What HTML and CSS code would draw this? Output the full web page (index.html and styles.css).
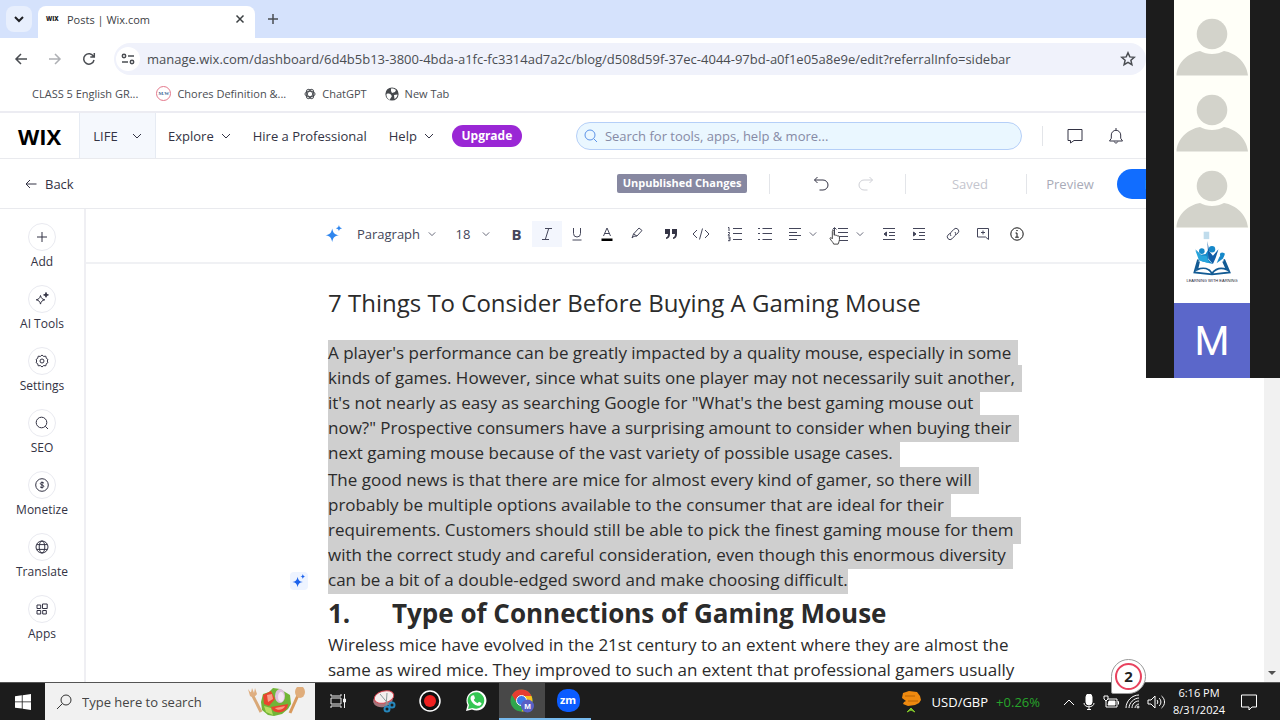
FILE: index.html
```html
<!DOCTYPE html>
<html lang="en">
<head>
<meta charset="utf-8">
<title>Posts | Wix.com</title>
<link rel="stylesheet" href="styles.css">
</head>
<body>
<svg class="defs" aria-hidden="true">
  <symbol id="chev" viewBox="0 0 10 10"><path d="M1 3l4 4 4-4"/></symbol>
  <symbol id="person" viewBox="0 0 76 76"><circle cx="38" cy="34" r="15.300"/><path d="M2.500 75.500C3 63 14 53 26 51c7 4 17 4 24 0 12 2 23 12 24 24.500z"/></symbol>
  <symbol id="spark" viewBox="0 0 20 20"><path d="M8 4c1 5 2.500 6.500 7.500 7.500C10.500 12.500 9 14 8 19c-1-5-2.500-6.500-7.500-7.500C5.500 10.500 7 9 8 4zM15.500 0c.5 2.300 1.200 3 3.500 3.500-2.300.5-3 1.200-3.500 3.500-.5-2.300-1.200-3-3.500-3.500 2.300-.5 3-1.200 3.500-3.500z"/></symbol>
</svg>

<header class="browser">
  <div class="tabstrip">
    <button class="tabsearch" aria-label="Search tabs"><svg class="ic s10"><use href="#chev"/></svg></button>
    <div class="tab"><span class="favicon">WIX</span><span class="tabname">Posts | Wix.com</span>
      <button aria-label="Close tab"><svg class="ic s10" viewBox="0 0 10 10"><path d="M1.500 1.500l7 7M8.500 1.500l-7 7"/></svg></button></div>
    <button class="newtab" aria-label="New tab"><svg class="ic s12" viewBox="0 0 12 12"><path d="M6 1v10M1 6h10"/></svg></button>
  </div>
  <div class="navbar">
    <button aria-label="Back"><svg class="ic s14" viewBox="0 0 14 14"><path d="M13 7H2M7 2L2 7l5 5"/></svg></button>
    <button class="dim" aria-label="Forward"><svg class="ic s14" viewBox="0 0 14 14"><path d="M1 7h11M7 2l5 5-5 5"/></svg></button>
    <button aria-label="Reload"><svg class="ic s14" viewBox="0 0 14 14"><path d="M11.500 4.500A5.200 5.200 0 1 0 12 8M12.300 1v4H8.300"/></svg></button>
    <div class="omnibox">
      <button class="siteinfo" aria-label="Site information"><svg class="ic s14" viewBox="0 0 14 14"><circle cx="3" cy="4" r="1.700"/><path d="M7 4h6M1 10h6"/><circle cx="11" cy="10" r="1.700"/></svg></button>
      <input class="url" aria-label="Address" value="manage.wix.com/dashboard/6d4b5b13-3800-4bda-a1fc-fc3314ad7a2c/blog/d508d59f-37ec-4044-97bd-a0f1e05a8e9e/edit?referralInfo=sidebar">
      <button class="star" aria-label="Bookmark"><svg class="ic s16" viewBox="0 0 16 16"><path d="M8 1.800l1.800 4.100 4.500.4-3.400 3 1 4.400L8 11.400l-3.900 2.300 1-4.400-3.400-3 4.500-.4z"/></svg></button>
    </div>
  </div>
  <nav class="bookmarks">
    <a href="#">CLASS 5 English GR...</a>
    <a href="#"><span class="mw">M.W</span>Chores Definition &amp;...</a>
    <a href="#"><svg class="ic s12" viewBox="0 0 12 12"><ellipse cx="6" cy="6" rx="5" ry="2.700"/><ellipse cx="6" cy="6" rx="5" ry="2.700" transform="rotate(60 6 6)"/><ellipse cx="6" cy="6" rx="5" ry="2.700" transform="rotate(120 6 6)"/></svg>ChatGPT</a>
    <a href="#"><svg class="s14" viewBox="0 0 14 14"><circle cx="7" cy="7" r="6.600" fill="#45484c"/><path d="M1.500 7c3-1 4 0 5 1.500S5 11 5 13C2.500 12 1.200 10 1.500 7zM6 1.500c2-.3 4 .5 5 1.500l-1 2-3 1-1-2zM9 8l3.500-.5c0 2-1.500 4-3 4.500z" fill="#fff"/></svg>New Tab</a>
  </nav>
</header>

<header class="wixbar">
  <div class="logo">WIX</div>
  <button class="site">LIFE<svg class="ic s10"><use href="#chev"/></svg></button>
  <nav class="menu">
    <button>Explore<svg class="ic s10"><use href="#chev"/></svg></button>
    <a href="#">Hire a Professional</a>
    <button>Help<svg class="ic s10"><use href="#chev"/></svg></button>
  </nav>
  <button class="upgrade">Upgrade</button>
  <label class="search"><svg class="ic s14" viewBox="0 0 14 14"><circle cx="6" cy="6" r="5"/><path d="M9.700 9.700L13 13"/></svg><input type="search" aria-label="Search" placeholder="Search for tools, apps, help &amp; more..."></label>
  <span class="rule"></span>
  <button class="inbox" aria-label="Inbox"><svg class="ic s18" viewBox="0 0 18 18"><path d="M2 2.500h14v11H8L4.500 16v-2.500H2z"/></svg></button>
  <button class="bell" aria-label="Notifications"><svg class="ic s18" viewBox="0 0 18 18"><path d="M2.500 14h13l-1.800-2.700V8a4.700 4.700 0 0 0-9.400 0v3.300zM7.200 14.500c.5 2 3 2 3.600 0M9 1v2"/></svg></button>
</header>

<div class="actionbar">
  <button class="back"><svg class="ic s12" viewBox="0 0 12 12"><path d="M11.500 6H1M5 2L1 6l4 4"/></svg>Back</button>
  <span class="badge">Unpublished Changes</span>
  <span class="rule"></span>
  <button class="undo" aria-label="Undo"><svg class="ic s16" viewBox="0 0 16 16"><path d="M4.500 1L1.500 4l3 3M1.500 4H10a5 5 0 0 1 0 10H6.500"/></svg></button>
  <button class="redo" aria-label="Redo"><svg class="ic s16" viewBox="0 0 16 16"><path d="M11.500 1l3 3-3 3M14.500 4H6a5 5 0 0 0 0 10h3.500"/></svg></button>
  <span class="rule"></span>
  <span class="saved">Saved</span>
  <span class="rule"></span>
  <button class="preview">Preview</button>
  <button class="publish">Publish</button>
</div>

<div class="workspace">
  <nav class="sidebar">
    <button><span><svg class="ic s12" viewBox="0 0 12 12"><path d="M6 1v10M1 6h10"/></svg></span>Add</button>
    <button><span><svg class="ic s14" viewBox="0 0 14 14"><path d="M5.500 3.500c.7 2.800 1.500 3.600 4.300 4.300-2.800.7-3.600 1.500-4.300 4.300-.7-2.800-1.500-3.600-4.300-4.300 2.800-.7 3.600-1.500 4.300-4.300z"/><path d="M11 .5c.4 1.500.9 2 2.400 2.400-1.500.4-2 .9-2.400 2.400-.4-1.500-.9-2-2.400-2.400C10.100 2.500 10.600 2 11 .5z" fill="#333344"/></svg></span>AI Tools</button>
    <button><span><svg class="ic s14" viewBox="0 0 14 14"><path d="M7 1l1.600 1.400 2.200-.2.500 2.100L13 5.600 12.200 7l.8 1.500-1.700 1.200-.5 2.100-2.200-.2L7 13l-1.600-1.400-2.200.2-.5-2.100L1 8.500 1.800 7 1 5.600l1.700-1.300.5-2.100 2.200.2z"/><circle cx="7" cy="7" r="2"/></svg></span>Settings</button>
    <button><span><svg class="ic s14" viewBox="0 0 14 14"><circle cx="6.500" cy="6.500" r="5.300"/><path d="M10.300 10.300L13 13"/></svg></span>SEO</button>
    <button><span><svg class="ic s14" viewBox="0 0 14 14"><circle cx="7" cy="7" r="6.300"/><path d="M9 5.200C8 4 5.200 4.200 5.300 5.700 5.400 7.300 8.800 6.600 8.800 8.300 8.800 9.800 6 10 5 8.800M7 3.500v7"/></svg></span>Monetize</button>
    <button><span><svg class="ic s14" viewBox="0 0 14 14"><circle cx="7" cy="7" r="6"/><ellipse cx="7" cy="7" rx="2.800" ry="6"/><path d="M1.800 4.600h10.400M1.800 9.400h10.400"/></svg></span>Translate</button>
    <button><span><svg class="ic s12" viewBox="0 0 12 12"><path d="M1 2h3.700v3.500H1zM1 7.500h3.700V11H1zM6.700 7.500h3.600V11H6.700zM6.500 1h4.700v4.500H6.500z"/></svg></span>Apps</button>
  </nav>

  <main class="editor">
    <div class="toolbar" role="toolbar">
      <button class="t-ai" aria-label="AI"><svg class="s18 aiblue"><use href="#spark"/></svg></button>
      <button class="t-para">Paragraph<svg class="ic s8"><use href="#chev"/></svg></button>
      <button class="t-size">18<svg class="ic s8"><use href="#chev"/></svg></button>
      <button class="tb" aria-label="Bold"><b>B</b></button>
      <button class="tb on" aria-label="Italic"><svg class="ic s14" viewBox="0 0 14 14"><path d="M5 1.500h7M2 12.500h7M8.700 1.500l-3.400 11"/></svg></button>
      <button class="tb" aria-label="Underline"><svg class="ic s14" viewBox="0 0 14 14"><path d="M3.500 1v5.500a3.500 3.500 0 0 0 7 0V1M2.500 13h9"/></svg></button>
      <button class="tb" aria-label="Text color"><svg class="ic s14" viewBox="0 0 14 14"><path d="M3.500 9L7 1l3.500 8M4.500 6.500h5"/><path d="M1.500 13h11" stroke="#000" stroke-width="3"/></svg></button>
      <button class="tb" aria-label="Highlight"><svg class="ic s14" viewBox="0 0 14 14"><path d="M2 11l1.500-4L9 1 12 3.500 7 9l-3 .3zM3.500 7L7 9"/></svg></button>
      <button class="tb wide" aria-label="Quote"><svg class="s14" viewBox="0 0 14 14"><path d="M1 2h5v5c0 3-1.500 4.500-4 5v-1.500C3.500 10 4 9 4 7H1zM8 2h5v5c0 3-1.500 4.500-4 5v-1.500c1.500-.5 2-1.500 2-3.500H8z" fill="#333344"/></svg></button>
      <button class="tb" aria-label="Code"><svg class="ic s18" viewBox="0 0 18 18"><path d="M5 5L1 9l4 4M13 5l4 4-4 4M10.500 3.500l-3 11"/></svg></button>
      <button class="tb wide" aria-label="Numbered list"><svg class="ic s16" viewBox="0 0 16 16"><path d="M6 2.500h9M6 7.500h9M6 13.500h9M1 1.500h1v3.500M1 6.500h1.500v1L1 9.200h2M1 11h2v3.700H1M1.500 12.800H3"/></svg></button>
      <button class="tb" aria-label="Bulleted list"><svg class="ic s16" viewBox="0 0 16 16"><path d="M5.500 2.500H15M5.500 7.500H15M5.500 13.500H15M1 2.500h2M1 7.500h2M1 13.500h2"/></svg></button>
      <button class="tb drop" aria-label="Align"><svg class="ic s14" viewBox="0 0 14 14"><path d="M1 1.500h12M1 5.500h8M1 8.500h12M1 12.500h8"/></svg><svg class="ic s8"><use href="#chev"/></svg></button>
      <button class="tb drop" aria-label="Line spacing"><svg class="ic s18" viewBox="0 0 18 18"><path d="M7 3.500h10M7 7.500h10M7 11.500h10M7 15.500h10M1.500 4.500L3.500 2.500l2 2M3.500 3v11"/></svg><svg class="ic s8"><use href="#chev"/></svg>
        <svg class="hand s16" viewBox="0 0 16 18"><path d="M5 11V2.500c0-1.500 2-1.500 2 0V7c1-.8 1.800-.3 2 .4 1-.6 1.800 0 2 .6 1-.5 2 0 2 1v3c0 2-1 3-1.500 5H6.500C6 15 3.500 13 2.500 11c-.5-1.300 1-2 2.500 0z"/></svg></button>
      <button class="tb wide" aria-label="Outdent"><svg class="ic s14" viewBox="0 0 14 14"><path d="M1 1.500h12M7 5.500h6M7 8.500h6M1 12.500h12"/><path d="M4.500 5L2 7l2.500 2z" fill="#44465a"/></svg></button>
      <button class="tb" aria-label="Indent"><svg class="ic s14" viewBox="0 0 14 14"><path d="M1 1.500h12M7 5.500h6M7 8.500h6M1 12.500h12"/><path d="M1.500 5L4 7 1.500 9z" fill="#44465a"/></svg></button>
      <button class="tb wide" aria-label="Link"><svg class="ic s14" viewBox="0 0 14 14"><path d="M5 9a2.600 2.600 0 0 1 0-3.700L8 2.200a2.700 2.700 0 0 1 3.900 3.900L10.300 7.700M9 5a2.600 2.600 0 0 1 0 3.700L6 11.800a2.700 2.700 0 0 1-3.900-3.900L3.700 6.300"/></svg></button>
      <button class="tb" aria-label="Comment"><svg class="ic s14" viewBox="0 0 14 14"><path d="M1.500 1.500h11v11L9.500 10h-8zM7 3.500v4M5 5.500h4"/></svg></button>
      <button class="tb wide" aria-label="Info"><svg class="ic s14 info" viewBox="0 0 14 14"><circle cx="7" cy="7" r="6.200"/><path d="M5.500 6H7v4M5.200 10.200h3.600M6.300 3.600h1.400"/></svg></button>
    </div>
    <article class="post">
      <h1>7 Things To Consider Before Buying A Gaming Mouse</h1>
      <p><mark>A player's performance can be greatly impacted by a quality mouse, especially in some<br>kinds of games. However, since what suits one player may not necessarily suit another,<br>it's not nearly as easy as searching Google for "What's the best gaming mouse out<br>now?" Prospective consumers have a surprising amount to consider when buying their<br>next gaming mouse because of the vast variety of possible usage cases.</mark></p>
      <p><mark>The good news is that there are mice for almost every kind of gamer, so there will<br>probably be multiple options available to the consumer that are ideal for their<br>requirements. Customers should still be able to pick the finest gaming mouse for them<br>with the correct study and careful consideration, even though this enormous diversity<br></mark><mark class="end">can be a bit of a double-edged sword and make choosing difficult.</mark>
        <button class="assist" aria-label="AI assistant"><svg class="s14"><use href="#spark"/></svg></button></p>
      <h2><span>1.</span>Type of Connections of Gaming Mouse</h2>
      <p>Wireless mice have evolved in the 21st century to an extent where they are almost the<br>same as wired mice. They improved to such an extent that professional gamers usually</p>
    </article>
  </main>
  <div class="scrollbar"><svg class="s8" viewBox="0 0 8 8"><path d="M0 2h8L4 6z" fill="#505050"/></svg></div>
</div>

<footer class="taskbar">
  <button class="start" aria-label="Start"><svg class="s16" viewBox="0 0 16 16"><path d="M0 2.300l6.800-1v6.200H0zM7.600 1.200L16 0v7.500H7.600zM0 8.300h6.800v6.300L0 13.700zM7.600 8.300H16V16l-8.400-1.200z" fill="#fff"/></svg></button>
  <label class="winsearch"><svg class="ic s16" viewBox="0 0 16 16"><circle cx="10" cy="6" r="5"/><path d="M6.400 9.600L1 15"/></svg><input aria-label="Type here to search" placeholder="Type here to search">
    <svg class="salad" viewBox="0 0 58 30"><path d="M4 5l10 20" stroke="#d9a877" stroke-width="3"/><path d="M1 2l2 7c3 2 6 0 7-2L8 1 7 6 5 1 4 6z" fill="#dfae80"/><path d="M52 6L43 26" stroke="#d99a5e" stroke-width="3"/><ellipse cx="53" cy="5" rx="5" ry="6" fill="#e0ad7b"/><path d="M14 15l2-8 6-2 4-4 7 1 5 3 5 3 1 9-3 5-6 5-8 2-6-1-6-5z" fill="#71b537"/><path d="M16 8l8-4 4 8-6 7-5-2z" fill="#e9442e"/><path d="M20 8l5-1 1 5-5 3z" fill="#f7a088"/><path d="M24 20l17-3c0 9-14 12-17 3z" fill="#e8452f"/><path d="M28 21l10-2c-1 4-8 5-10 2z" fill="#f99a81"/><ellipse cx="33" cy="9" rx="5" ry="7" fill="#ddbfdc"/><ellipse cx="34" cy="10" rx="3" ry="5" fill="#f3e4f3"/><path d="M17 19l7 2 2 7-7-3z" fill="#b7dd62"/></svg></label>
  <nav class="apps">
    <button aria-label="Task view"><svg class="s16" viewBox="0 0 16 16" fill="none" stroke="#eee"><path d="M1 1v2h10V1M1 5h10v6H1zM1 15v-2h10v2M14.500 1v14"/><path d="M13.500 6h2v3h-2z" fill="#eee"/></svg></button>
    <button aria-label="Snipping Tool"><svg class="s24" viewBox="0 0 24 24"><ellipse cx="11" cy="11" rx="10" ry="7" fill="#a5757c" transform="rotate(-15 11 11)"/><ellipse cx="12" cy="8" rx="10" ry="6" fill="#f4eeee" stroke="#d44450" transform="rotate(-15 12 8)"/><path d="M8 5l10 12M15 4l-1 14" stroke="#899"/><g fill="none" stroke="#2687bd" stroke-width="2"><circle cx="15" cy="20" r="2.500"/><circle cx="20" cy="16" r="2.500"/></g></svg></button>
    <button aria-label="Recorder"><svg class="s24" viewBox="0 0 24 24"><circle cx="12" cy="12" r="10" fill="#111" stroke="#fff" stroke-width="1.500"/><circle cx="12" cy="12" r="6" fill="#ef2020"/></svg></button>
    <button aria-label="WhatsApp"><svg class="s24" viewBox="0 0 24 24"><path d="M2 22l1.500-6A10 10 0 1 1 8 20.500z" fill="#fff"/><path d="M4 20l1-4A8.300 8.300 0 1 1 8.500 19z" fill="#35c653"/><path d="M8 6.500l2-.2 1 3-1.200 1.500c.8 1.700 2 2.700 3.700 3.400l1.500-1.400 2.500 1.200c.2 2-2 3.300-4 2.700-3-.8-6-3.400-6.800-6.300C6.300 9 6.800 7.300 8 6.500z" fill="#fff"/></svg></button>
    <button class="active" aria-label="Chrome"><svg class="s24" viewBox="0 0 24 24"><circle cx="11.500" cy="11.500" r="11" fill="#2fa64d"/><path d="M2 6A11 11 0 0 1 21.500 7H11.500L7 14z" fill="#e63d31"/><path d="M21.500 7a11 11 0 0 1-10 15.500l5-9L13 7z" fill="#f9c220"/><circle cx="11.500" cy="11.500" r="5" fill="#3d79e8" stroke="#fff"/><circle cx="17.500" cy="17" r="6.500" fill="#5860c5"/><text x="17.500" y="20" text-anchor="middle" class="mini">M</text></svg></button>
    <button class="open" aria-label="Zoom"><span class="zm">zm</span></button>
  </nav>
  <div class="news"><svg class="s24" viewBox="0 0 24 24"><path d="M3 3l6-2 8 1 3 4 1 4-2 3-4 2-7 1-5-2 1-2 2-1-4-3z" fill="#ee890f"/><path d="M5 6h10M8 11h10" stroke="#b96505"/><path d="M7 22l4-4 4 4-4-2z" fill="#82c829" stroke="#82c829"/></svg><span>USD/GBP</span><span class="up">+0.26%</span></div>
  <div class="tray">
    <svg class="ic s12" viewBox="0 0 12 12"><path d="M1 9l5-5 5 5"/></svg>
    <svg class="ic s16" viewBox="0 0 16 16"><rect x="5" y="0" width="6" height="11" rx="3" fill="#fff"/><path d="M3 9c0 5 10 5 10 0M8 13v3M6 15.500h4"/></svg>
    <svg class="ic s16" viewBox="0 0 16 16"><path d="M5 5h9v8H3V9M14.500 7.500h1v3M1 2h4v3L3 7 1 5zM3 7v2"/><path d="M6 7h6v4H5z" fill="#fff"/></svg>
    <svg class="ic s16" viewBox="0 0 16 16"><path d="M1 14C1 7 7 1 14 1M4 14c0-5 5-10 10-10M7 14c0-4 3-7 7-7M10 14c0-2 2-4 4-4"/><circle cx="13" cy="13" r="1"/></svg>
    <svg class="ic s18" viewBox="0 0 18 18"><path d="M1 7h3l4-4v12l-4-4H1zM10 7c1 1 1 3 0 4M12 5c2.500 2 2.500 6 0 8M14.500 3c4 3 4 9 0 12"/></svg>
  </div>
  <div class="pin"><span>2</span></div>
  <time class="clock"><span>6:16 PM</span><span>8/31/2024</span></time>
  <button class="notif" aria-label="Notifications"><svg class="ic s18" viewBox="0 0 18 18"><path d="M1.500 2h15v12H12l-3 3v-3H1.500z"/></svg></button>
</footer>

<aside class="meeting">
  <div class="people">
    <svg class="person"><use href="#person"/></svg>
    <svg class="person"><use href="#person"/></svg>
    <svg class="person"><use href="#person"/></svg>
    <div class="school"><svg viewBox="0 0 76 54"><path d="M29 4h6v8h-6z" fill="#c0dcec"/><g fill="#1688c9"><circle cx="27" cy="25" r="3"/><circle cx="38" cy="23" r="3.500"/><circle cx="49" cy="29" r="2.500"/><path d="M20 23l6 6 5-1 4-6-1 12 5 5-12-3z"/><path d="M33 14l2 11 4 5 6-7-3 9-3 7-5-6z" fill="#125ea8"/><path d="M43 38l3-7 6-4-2 6z"/><path d="M20 24l7 6 5 0 3 8-11-3z" fill="#27a5dc"/></g><path d="M23 34l-4 14 19 2 19-2-6-14M24 36l-2 9c7-3 13-1 16 4 4-5 9-7 16-4l-4-9" fill="none" stroke="#135b94" stroke-width="2"/></svg><span>LEARNING WITH EARNING</span></div>
    <div class="initial">M</div>
  </div>
</aside>
</body>
</html>
```
FILE: styles.css
```css
* { box-sizing: border-box; }
body { margin: 0; height: 100vh; overflow: hidden; display: flex; flex-direction: column; background: #fff; color: #333344; font-family: "Open Sans", "Noto Sans", sans-serif; font-size: 12px; position: relative; }
button, input { font: inherit; color: inherit; background: none; border: 0; padding: 0; margin: 0; outline: 0; }
button { display: flex; align-items: center; justify-content: center; flex: none; white-space: nowrap; }
a { color: inherit; text-decoration: none; white-space: nowrap; }
svg { flex: none; display: block; }
.defs { position: absolute; width: 0; height: 0; }
.ic { fill: none; stroke: currentColor; stroke-width: 1; }
.s8 { width: 8px; height: 8px; }
.s10 { width: 10px; height: 10px; }
.s12 { width: 12px; height: 12px; }
.s14 { width: 14px; height: 14px; }
.s16 { width: 16px; height: 16px; }
.s18 { width: 18px; height: 18px; }
.s24 { width: 24px; height: 24px; }
.rule { width: 1px; height: 20px; background: #e3e5e9; flex: none; }

.browser { flex: none; background: #fff; border-bottom: 2px solid #ececf2; color: #4a4d52; }
.browser .ic { stroke-width: 1.5; }
.tabstrip { height: 38px; background: #d5e2fc; display: flex; padding-left: 6px; align-items: flex-end; }
.tabsearch { width: 26px; height: 26px; border-radius: 8px; background: #e8effd; margin: 0 6px 6px 0; color: #202124; }
.browser .tabsearch .ic { stroke-width: 2; }
.tab { width: 217px; height: 32px; background: #fff; border-radius: 8px 8px 0 0; display: flex; align-items: center; padding: 0 10px 6px 8px; font-size: 11px; color: #3c4043; }
.favicon { font: 800 6px "Open Sans", sans-serif; width: 21px; color: #222; }
.tabname { flex: 1; }
.newtab { width: 36px; height: 38px; }
.navbar { height: 42px; display: flex; align-items: center; padding-left: 4px; }
.navbar > button { width: 34px; height: 34px; }
.navbar > .dim { color: #aeb0b4; }
.omnibox { flex: 1; height: 32px; margin: 0 134px 0 8px; border-radius: 16px; background: #f0f2fb; display: flex; align-items: center; padding: 0 10px 0 2px; }
.siteinfo { width: 24px; height: 24px; border-radius: 12px; background: #fff; margin-right: 7px; }
.url { flex: 1; min-width: 0; font-size: 13px; }
.bookmarks { height: 31px; display: flex; align-items: center; padding: 0 0 4px 32px; gap: 18px; font-size: 11px; }
.bookmarks a { display: flex; gap: 6px; align-items: center; }
.bookmarks .ic { stroke-width: 1; }
.mw { width: 15px; height: 15px; border: 1px solid #e4788b; border-radius: 8px; font: 700 5px/13px "Liberation Serif", serif; text-align: center; color: #3f6b98; }

.wixbar { height: 46px; flex: none; display: flex; align-items: center; border-bottom: 1px solid #e9eaee; font-size: 13px; }
.logo { width: 79px; text-align: center; font: 700 22px "Open Sans", sans-serif; color: #000; }
.site { width: 77px; height: 45px; gap: 14px; background: #f5f8fd; border: 1px solid #e6ebf3; border-width: 0 1px; }
.menu { display: flex; padding-left: 12px; gap: 22px; }
.menu button { gap: 7px; }
.upgrade { margin-left: 18px; width: 70px; height: 22px; border-radius: 11px; background: #9a27d5; color: #fff; font-weight: 700; font-size: 12px; }
.search { margin-left: 54px; width: 446px; height: 28px; border: 1px solid #b5cff8; border-radius: 14px; background: #eaf7ff; display: flex; align-items: center; gap: 7px; padding: 0 7px; color: #5c93e8; }
.search input { flex: 1; min-width: 0; }
.search input::placeholder { color: #868aa5; opacity: 1; }
.wixbar > .rule { margin-left: 20px; }
.inbox, .bell { margin-left: 23px; }

.actionbar { height: 50px; flex: none; display: flex; align-items: center; border-bottom: 1px solid #e9eaee; font-size: 13px; padding: 0 63px 0 25px; }
.back { gap: 8px; margin-right: auto; }
.badge { height: 19px; width: 130px; line-height: 18px; text-align: center; background: #8788a1; color: #fff; border-radius: 2px; font-size: 11px; font-weight: 700; white-space: nowrap; }
.badge + .rule { margin: 0 43px 0 22px; }
.undo { margin-right: 29px; }
.redo { color: #cfd0d6; margin-right: 31px; }
.saved { width: 120px; padding-left: 8px; text-align: center; color: #c4c5ce; }
.preview { width: 90px; padding-right: 4px; color: #a9abb8; }
.publish { width: 100px; height: 30px; border-radius: 15px; background: #116dff; color: #fff; }

.workspace { flex: 1; min-height: 0; display: flex; }
.sidebar { width: 86px; flex: none; border-right: 2px solid #efeff3; display: flex; flex-direction: column; align-items: center; padding-top: 14px; gap: 12px; }
.sidebar button { flex-direction: column; height: 50px; line-height: 22px; justify-content: flex-start; }
.sidebar span { width: 28px; height: 28px; flex: none; border: 1px solid #e9eaf0; border-radius: 14px; display: flex; align-items: center; justify-content: center; }
.editor { flex: 1; min-width: 0; overflow: hidden; }
.toolbar { height: 55px; border-bottom: 2px solid #f0f1f4; display: flex; align-items: center; justify-content: center; padding-bottom: 3px; color: #44465a; }
.toolbar > button { height: 26px; }
.aiblue { fill: #2f86ee; }
.t-ai { width: 30px; }
.t-para { width: 96px; gap: 8px; font-size: 13px; }
.t-size { width: 57px; gap: 12px; font-size: 13px; }
.toolbar > .tb { width: 30px; }
.toolbar > .wide { margin-left: 4px; }
.toolbar > .drop { width: 45px; gap: 7px; position: relative; }
.tb b { font-size: 15px; }
.on { background: #f3f6fd; }
.info { color: #111; }
.hand { position: absolute; left: 2px; top: 8px; fill: #fff; stroke: #333; }

.post { width: 694px; margin: 0 auto; color: #2b2b2b; padding-top: 20px; }
h1 { margin: 0 0 18px; font-size: 24px; line-height: 38px; font-weight: 400; white-space: nowrap; }
.post p { margin: 0; padding-bottom: 2px; font-size: 17px; line-height: 25px; white-space: nowrap; position: relative; }
mark { color: inherit; background: #cfcfcf; padding: 1px 7px 3px 0; -webkit-box-decoration-break: clone; box-decoration-break: clone; }
.end { padding-right: 0; }
.assist { position: absolute; left: -38px; bottom: 4px; width: 18px; height: 18px; background: #eef4ff; border-radius: 4px; fill: #1b62ec; }
h2 { margin: 0; font-size: 26px; line-height: 38px; display: flex; white-space: nowrap; }
h2 span { width: 64px; }
.scrollbar { width: 16px; background: #f1f1f1; display: flex; align-items: flex-end; justify-content: center; padding-bottom: 5px; }

.taskbar { height: 38px; flex: none; display: flex; align-items: stretch; background: #1c1c1c; color: #fff; border-top: 1px solid #555; position: relative; }
.start { width: 45px; }
.winsearch { width: 270px; background: #f1f1f1; display: flex; align-items: center; gap: 10px; padding: 0 10px 0 11px; color: #333; }
.winsearch input { flex: 1; min-width: 0; font-size: 13px; }
.winsearch input::placeholder { color: #444; opacity: 1; }
.salad { width: 58px; height: 30px; }
.apps { display: flex; }
.apps button { width: 46px; border-bottom: 2px solid transparent; }
.apps .active { background: #484848; border-color: #76b9ed; }
.apps .open { border-color: #76b9ed; }
.mini { font: 700 8px "Liberation Sans", sans-serif; fill: #fff; }
.zm { width: 23px; height: 23px; border-radius: 10px; background: #0b5cff; font: 700 11px/22px "Open Sans", sans-serif; }
.news { margin-left: auto; display: flex; align-items: center; gap: 8px; font-size: 13px; }
.up { color: #27a52b; }
.tray { display: flex; align-items: center; gap: 6px; padding: 0 1px 0 23px; }
.clock { width: 66px; display: flex; flex-direction: column; justify-content: center; text-align: center; font-size: 11px; line-height: 17px; padding-bottom: 2px; }
.notif { width: 34px; margin-right: 14px; }
.pin { position: absolute; right: 134px; top: -24px; width: 35px; height: 35px; background: #fff; border: 1px solid #999; border-radius: 18px 18px 18px 2px; padding: 3px; }
.pin span { display: block; width: 27px; height: 27px; border: 2px solid #e8425e; border-radius: 14px; text-align: center; font: 700 15px/22px "Open Sans", sans-serif; color: #222; }

.meeting { position: absolute; top: 0; right: 0; width: 134px; background: #1c1c1c; }
.people { width: 76px; margin-left: 28px; background: #fffff8; }
.person { width: 76px; height: 76px; fill: #d3d3cb; }
.school { height: 75px; background: #fff; overflow: hidden; text-align: center; }
.school span { display: block; font: 400 4px/6px "Liberation Sans", sans-serif; color: #223; white-space: nowrap; }
.school svg { width: 76px; height: 50px; }
.initial { height: 75px; background: #5b67ca; color: #fff; font: 400 40px/78px Roboto, sans-serif; text-align: center; }
```
